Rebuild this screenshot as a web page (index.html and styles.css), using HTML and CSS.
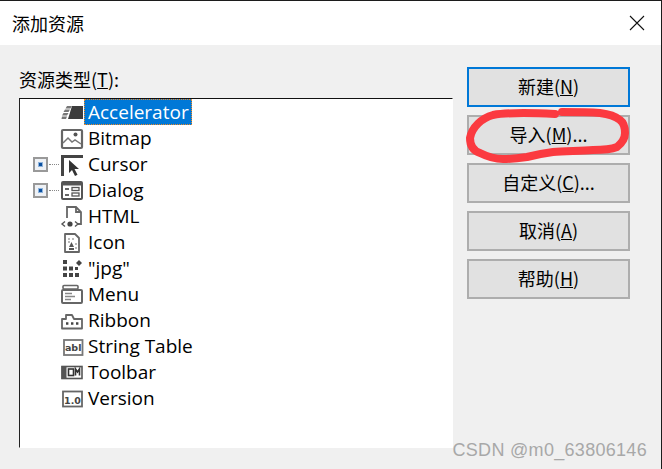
FILE: index.html
```html
<!DOCTYPE html>
<html lang="zh-CN">

<head>
    <meta charset="UTF-8" />
    <title>添加资源</title>
    <link rel="stylesheet" href="styles.css">
</head>

<body>
    <div class="window">
        <div class="titlebar">
            <div class="title">添加资源</div>
            <svg class="close" width="16" height="16" viewBox="0 0 16 16">
                <path d="M1 1 L15 15 M15 1 L1 15" stroke="#111" stroke-width="1.1" fill="none" />
            </svg>
        </div>

        <div class="content">
            <div class="left">
                <div class="list-label">资源类型(<u>T</u>):</div>
                <div class="tree">
                    <div class="row">
                        <span class="expander-space"></span>
                        <svg class="icon" viewBox="0 0 24 24">
                            <path d="M12 6h11v13H8z" fill="#3c3c3c" />
                            <path d="M7 6h5l-1.500 2.500h-5zM5 9.500h5L8.500 12h-5zM3.500 13h5L7 15.500H2zM2 16.500h5L6 19H1.500z" fill="#777" />
                        </svg>
                        <span class="label selected">Accelerator</span>
                    </div>
                    <div class="row">
                        <span class="expander-space"></span>
                        <svg class="icon" viewBox="0 0 24 24">
                            <rect x="2" y="4" width="20" height="18" rx="1" fill="#fff" stroke="#666" stroke-width="2.200" />
                            <circle cx="15.500" cy="8.500" r="2" fill="#555" />
                            <path d="M3 17l5-5 4 4 3-2 6 4" fill="none" stroke="#777" stroke-width="1.500" />
                        </svg>
                        <span class="label">Bitmap</span>
                    </div>
                    <div class="row">
                        <span class="expander"><i></i></span>
                        <span class="dots"></span>
                        <svg class="icon" viewBox="0 0 24 24">
                            <path d="M1 24V3h22v3H4v18z" fill="#444" />
                            <path d="M9 8v13l3-3 3 6 2.500-1.200-3-5.800H19z" fill="#333" />
                        </svg>
                        <span class="label">Cursor</span>
                    </div>
                    <div class="row">
                        <span class="expander"><i></i></span>
                        <span class="dots"></span>
                        <svg class="icon" viewBox="0 0 24 24">
                            <rect x="2" y="4" width="20" height="17" rx="1" fill="#fff" stroke="#555" stroke-width="2" />
                            <path d="M2 6h20" stroke="#555" stroke-width="3" />
                            <path d="M5 11h4M5 17h4" stroke="#666" stroke-width="2" />
                            <rect x="12" y="9.500" width="7" height="3" fill="none" stroke="#555" stroke-width="1.300" />
                            <rect x="12" y="15" width="7" height="3" fill="none" stroke="#555" stroke-width="1.300" />
                        </svg>
                        <span class="label">Dialog</span>
                    </div>
                    <div class="row">
                        <span class="expander-space"></span>
                        <svg class="icon" viewBox="0 0 24 24">
                            <path d="M7 14V3h9l5 5v12h-3" fill="#fff" stroke="#666" stroke-width="1.800" />
                            <path d="M16 3v5h5" fill="none" stroke="#666" stroke-width="1.800" />
                            <circle cx="10" cy="20" r="2.600" fill="#444" />
                            <path d="M5 17.500l-3 2.500 3 2.500M15 17.500l3 2.500-3 2.500" fill="none" stroke="#555" stroke-width="1.400" />
                        </svg>
                        <span class="label">HTML</span>
                    </div>
                    <div class="row">
                        <span class="expander-space"></span>
                        <svg class="icon" viewBox="0 0 24 24">
                            <path d="M5 4h10l4 4v14H5z" fill="#fff" stroke="#666" stroke-width="1.800" stroke-linejoin="round" />
                            <path d="M8 9h2M12 9h2M8 12h2M15 14h2M15 18h2" stroke="#777" stroke-width="1.200" />
                            <path d="M11.500 12l2.500 5H9zM9 18h5v2H9z" fill="#555" />
                        </svg>
                        <span class="label">Icon</span>
                    </div>
                    <div class="row">
                        <span class="expander-space"></span>
                        <svg class="icon" viewBox="0 0 24 24">
                            <path d="M3 4h4v4H3zM3 10.500h4v4H3zM9 10.500h4v4H9zM3 17h4v4H3zM9 17h4v4H9zM15 17h4v4h-4zM15 11h3v3h-3z" fill="#444" />
                            <path d="M19 4l3 3-3 3-3-3z" fill="#444" />
                        </svg>
                        <span class="label">"jpg"</span>
                    </div>
                    <div class="row">
                        <span class="expander-space"></span>
                        <svg class="icon" viewBox="0 0 24 24">
                            <rect x="3" y="3.500" width="15" height="3.500" rx="1" fill="#fff" stroke="#666" stroke-width="1.600" />
                            <rect x="2" y="8" width="20" height="13" rx="1" fill="#fff" stroke="#666" stroke-width="2" />
                            <path d="M5 11.500h7M5 14.500h10M5 17.500h6" stroke="#888" stroke-width="1.500" />
                        </svg>
                        <span class="label">Menu</span>
                    </div>
                    <div class="row">
                        <span class="expander-space"></span>
                        <svg class="icon" viewBox="0 0 24 24">
                            <path d="M2 20.500V11h4V7h6l2 4h8v9.500z" fill="#fff" stroke="#666" stroke-width="1.800" stroke-linejoin="round" />
                            <path d="M6 15.500h2.400M11 15.500h2.400M16 15.500h2.400" stroke="#444" stroke-width="2.400" />
                        </svg>
                        <span class="label">Ribbon</span>
                    </div>
                    <div class="row">
                        <span class="expander-space"></span>
                        <svg class="icon" viewBox="0 0 24 24">
                            <rect x="4" y="6" width="18.500" height="15" fill="#fff" stroke="#777" stroke-width="1.800" />
                            <text class="icon-text" x="13.200" y="17">abl</text>
                        </svg>
                        <span class="label">String Table</span>
                    </div>
                    <div class="row">
                        <span class="expander-space"></span>
                        <svg class="icon" viewBox="0 0 24 24">
                            <rect x="2" y="6.500" width="20" height="12" fill="#fff" stroke="#555" stroke-width="1.600" />
                            <rect x="1.500" y="6" width="5" height="13" fill="#555" />
                            <rect x="8.500" y="9" width="5" height="6.500" fill="none" stroke="#333" stroke-width="1.600" />
                            <path d="M15.500 15.500V9l2 3 2-3v6.500" fill="none" stroke="#333" stroke-width="1.600" />
                        </svg>
                        <span class="label">Toolbar</span>
                    </div>
                    <div class="row">
                        <span class="expander-space"></span>
                        <svg class="icon" viewBox="0 0 24 24">
                            <rect x="3" y="5.500" width="19" height="15" fill="#fff" stroke="#666" stroke-width="1.800" />
                            <text class="icon-text" x="12.500" y="17.500">1.0</text>
                        </svg>
                        <span class="label">Version</span>
                    </div>
                </div>
            </div>

            <div class="buttons">
                <button class="btn default">新建(<u>N</u>)</button>
                <button class="btn">导入(<u>M</u>)...</button>
                <button class="btn">自定义(<u>C</u>)...</button>
                <button class="btn">取消(<u>A</u>)</button>
                <button class="btn">帮助(<u>H</u>)</button>
            </div>
        </div>

        <!-- red marker circled over the import button -->
        <svg class="scribble" width="662" height="469" viewBox="0 0 662 469">
            <path class="mark" d="M555 114C535 113 510 112 493 115C482 118 472 127 470 138C470 146 474 151 480 153C488 157 495 159 503 159C512 159 520 158 527 157C535 155 545 153 553 152C565 151 580 151 593 150C603 150 612 149 617 147C622 143 625 138 625 133C625 127 624 123 620 120C615 116 608 114 600 113C588 112 575 112 562 112" />
        </svg>

        <div class="watermark">CSDN @m0_63806146</div>
    </div>
</body>

</html>
```

FILE: styles.css
```css
/* dialog */

html,
body {
    margin: 0;
    height: 100%;
}

body {
    background-color: #1c1c1c;
    overflow: hidden;
    font-family: "Noto Sans CJK SC", "Open Sans", sans-serif;
    color: #000;
}

.window {
    position: relative;
    width: 661px;
    height: 468px;
    margin-top: 1px;
    background-color: #f0f0f0;
    display: flex;
    flex-direction: column;
}

.titlebar {
    height: 44px;
    background-color: #fff;
    display: flex;
    align-items: center;
    justify-content: space-between;
    padding: 0 16px 0 12px;
}

.title {
    font-size: 18px;
}

.content {
    flex: 1;
    display: flex;
    padding: 22px 31px 21px 19px;
    gap: 14px;
}

.left {
    display: flex;
    flex-direction: column;
}

.list-label {
    height: 31px;
    font-size: 18px;
    line-height: 24px;
}

.tree {
    width: 434px;
    height: 350px;
    box-sizing: border-box;
    background-color: #fff;
    border-top: 1px solid #111;
    border-left: 1px solid #222;
    border-right: 1px solid #fff;
    border-bottom: 1px solid #fff;
}

.row {
    height: 26px;
    display: flex;
    align-items: center;
}

.expander-space {
    width: 40px;
}

.expander {
    width: 15px;
    height: 15px;
    box-sizing: border-box;
    margin-left: 13px;
    border: 2px solid #999;
    background-color: #eef1f5;
    display: flex;
    align-items: center;
    justify-content: center;
}

.expander i {
    width: 3px;
    height: 3px;
    background-color: #0a50a0;
    box-shadow: 0 0 0 1px #8fb4dc;
}

.dots {
    width: 10px;
    margin-left: 1px;
    margin-right: 1px;
    border-top: 1px dotted #888;
}

.icon {
    width: 24px;
    height: 24px;
    flex-shrink: 0;
}

.icon-text {
    font-family: "DejaVu Sans", sans-serif;
    font-size: 9.5px;
    font-weight: bold;
    text-anchor: middle;
    fill: #444;
}

.label {
    height: 26px;
    line-height: 26px;
    padding: 0 3px 0 4px;
    font-family: "Open Sans", "Liberation Sans", sans-serif;
    font-size: 19px;
    box-sizing: border-box;
}

.selected {
    background-color: #0078d7;
    color: #fff;
    outline: 1px dotted #f08a24;
    outline-offset: -1px;
}

.buttons {
    display: flex;
    flex-direction: column;
    gap: 8px;
}

.btn {
    width: 163px;
    height: 40px;
    padding: 0 0 2px;
    background-color: #e1e1e1;
    border: 2px solid #adadad;
    font-family: "Noto Sans CJK SC", "Open Sans", sans-serif;
    font-size: 18px;
    color: #000;
}

.btn.default {
    border-color: #0078d7;
}

.scribble {
    position: absolute;
    top: -1px;
    left: 0;
}

.mark {
    fill: none;
    stroke: #fb3a40;
    stroke-width: 8;
    stroke-linecap: round;
}

.watermark {
    position: absolute;
    right: 14px;
    bottom: 8px;
    font-family: "Liberation Sans", sans-serif;
    font-size: 18px;
    letter-spacing: 0.3px;
    color: #a8a8a8;
}
```
